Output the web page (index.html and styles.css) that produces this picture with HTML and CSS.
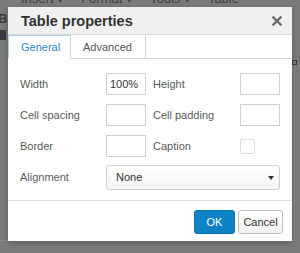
FILE: index.html
```html
<!DOCTYPE html>
<html lang="en">
    <head>
        <title>Table properties</title>
        <meta charset="UTF-8">
        <link rel="stylesheet" href="styles.css">
    </head>

    <body>
        <!-- editor behind the modal, dimmed -->
        <div class="editor">
            <div class="menuBar">
                <span>Insert &#9662;</span>
                <span>Format &#9662;</span>
                <span>Tools &#9662;</span>
                <span>Table</span>
            </div>
            <div class="toolBar">
                <b class="boldIcon">B</b>
                <span class="paraIcon"></span>
            </div>
            <div class="editArea">
                <span class="tableHandle"></span>
            </div>
        </div>

        <div class="dialog">
            <div class="dialogHead">
                <span class="dialogTitle">Table properties</span>
                <svg class="closeButton" width="10" height="10" viewBox="0 0 10 10">
                    <path d="M1.5 1.5 L8.5 8.5 M8.5 1.5 L1.5 8.5" stroke="#6b6b6b" stroke-width="2.4" stroke-linecap="square"/>
                </svg>
            </div>

            <div class="tabs">
                <span class="tab active">General</span>
                <span class="tab">Advanced</span>
            </div>

            <div class="formGrid">
                <label>Width</label>
                <input class="textBox" type="text" value="100%">
                <label class="secondLabel">Height</label>
                <input class="textBox" type="text">

                <label>Cell spacing</label>
                <input class="textBox" type="text">
                <label class="secondLabel">Cell padding</label>
                <input class="textBox" type="text">

                <label>Border</label>
                <input class="textBox" type="text">
                <label class="secondLabel">Caption</label>
                <span class="checkBox"></span>

                <label>Alignment</label>
                <div class="selectBox">
                    <span>None</span>
                    <span class="selectArrow"></span>
                </div>
            </div>

            <div class="dialogFoot">
                <button class="okButton">OK</button>
                <button class="cancelButton">Cancel</button>
            </div>
        </div>
    </body>
</html>
```

FILE: styles.css
```css
html, body
{
    margin: 0;
    height: 100%;
    overflow: hidden;
    background-color: #7b7b7b;
    font-family: "Liberation Sans", Arial, Helvetica, sans-serif;
}

*
{
    box-sizing: border-box;
}

/* the dimmed editor underneath */
.editor
{
    height: 100%;
    color: #3c3c3c;
}

.menuBar
{
    display: flex;
    gap: 17px;
    margin-top: -9px;
    padding-left: 21px;
    height: 20px;
    font-size: 13px;
    line-height: 16px;
}

.toolBar
{
    display: flex;
    flex-direction: column;
    padding-top: 2px;
    margin-left: -2px;
}

.boldIcon
{
    font-size: 13px;
    line-height: 12px;
}

.paraIcon
{
    width: 8px;
    height: 10px;
    margin-top: 5px;
    background-color: #3c3c3c;
    border-radius: 3px 0 0 3px;
}

.editArea
{
    margin: 26px 5px 0 0;
    height: 175px;
    border-right: 1px dotted #9b9b9b;
    border-bottom: 1px dotted #9b9b9b;
    display: flex;
    justify-content: flex-end;
}

.tableHandle
{
    width: 5px;
    height: 5px;
    margin: -6px -3px 0 0;
    border: 1px solid #3c3c3c;
}

/* modal */
.dialog
{
    position: absolute;
    left: 8px;
    top: 7px;
    width: 284px;
    background-color: white;
    box-shadow: 0 2px 6px rgba(0, 0, 0, 0.25);
}

.dialogHead
{
    display: flex;
    align-items: center;
    justify-content: space-between;
    height: 28px;
    padding: 0 10px 0 13px;
    background-color: #f0f0f0;
    border-bottom: 1px solid #d9d9d9;
}

.dialogTitle
{
    font-size: 14.5px;
    font-weight: bold;
    color: #333;
}

.closeButton
{
    margin-top: 1px;
}

.tabs
{
    display: flex;
    height: 24px;
    border-bottom: 1px solid #d4d4d4;
}

.tab
{
    display: flex;
    align-items: center;
    padding: 0 12px;
    font-size: 11px;
    color: #555;
    border-right: 1px solid #d4d4d4;
    border-bottom: 1px solid #d4d4d4;
    margin-bottom: -1px;
}

.tab.active
{
    color: #2d8ac7;
    width: 63px;
    border-left: 1px solid #a9cfe9;
    border-top: 1px solid #a9cfe9;
    border-bottom-color: white;
}

.tab + .tab
{
    width: 75px;
    padding-left: 12px;
}

.formGrid
{
    display: grid;
    grid-template-columns: 86px 47px 87px 40px;
    grid-auto-rows: 22px;
    row-gap: 9px;
    align-items: center;
    padding: 14px 12px 12px 12px;
}

.formGrid label
{
    font-size: 11px;
    color: #595959;
}

.textBox
{
    width: 40px;
    height: 22px;
    margin: 0;
    padding: 0 3px;
    border: 1px solid #cfcfcf;
    font-family: inherit;
    font-size: 11px;
    color: #333;
    outline: none;
}

.checkBox
{
    width: 15px;
    height: 15px;
    border: 1px solid #dcdcdc;
    border-radius: 2px;
    margin-top: 1px;
}

.selectBox
{
    grid-column: 2 / 5;
    height: 25px;
    display: flex;
    align-items: center;
    justify-content: space-between;
    padding: 0 5px 0 9px;
    border: 1px solid #cfcfcf;
    border-radius: 3px;
    background: linear-gradient(#ffffff, #f4f4f4);
    font-size: 11px;
    color: #333;
}

.selectArrow
{
    width: 0;
    height: 0;
    border-left: 3.5px solid transparent;
    border-right: 3.5px solid transparent;
    border-top: 4px solid #333;
    margin-top: 1px;
}

.dialogFoot
{
    display: flex;
    justify-content: flex-end;
    gap: 3px;
    padding: 9px 9px 7px 0;
    border-top: 1px solid #dcdcdc;
}

.okButton, .cancelButton
{
    height: 24px;
    font-family: inherit;
    font-size: 11px;
    border-radius: 3px;
    cursor: pointer;
}

.okButton
{
    width: 41px;
    background-color: #0d83c6;
    border: 1px solid #0b6fa8;
    color: white;
}

.cancelButton
{
    width: 45px;
    padding: 0;
    background: linear-gradient(#ffffff, #f2f2f2);
    border: 1px solid #bdbdbd;
    color: #333;
}
```
